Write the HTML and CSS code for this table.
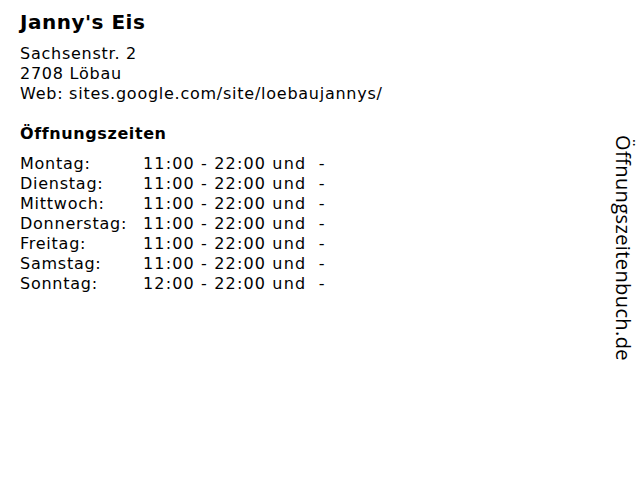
FILE: index.html
```html
<!DOCTYPE html>
<html lang="de">
<head>
<meta charset="utf-8">
<link rel="stylesheet" href="styles.css">
</head>
<body>
<div class="page">
  <main class="main">
    <h1 class="title">Janny's Eis</h1>
    <div class="address">
      <div>Sachsenstr. 2</div>
      <div>2708 Löbau</div>
      <div>Web: sites.google.com/site/loebaujannys/</div>
    </div>
    <h2 class="subtitle">Öffnungszeiten</h2>
    <div class="hours">
      <span class="day">Montag:</span><span class="time">11:00 - 22:00 und&nbsp; -</span>
      <span class="day">Dienstag:</span><span class="time">11:00 - 22:00 und&nbsp; -</span>
      <span class="day">Mittwoch:</span><span class="time">11:00 - 22:00 und&nbsp; -</span>
      <span class="day">Donnerstag:</span><span class="time">11:00 - 22:00 und&nbsp; -</span>
      <span class="day">Freitag:</span><span class="time">11:00 - 22:00 und&nbsp; -</span>
      <span class="day">Samstag:</span><span class="time">11:00 - 22:00 und&nbsp; -</span>
      <span class="day">Sonntag:</span><span class="time">12:00 - 22:00 und&nbsp; -</span>
    </div>
  </main>
  <aside class="side">Öffnungszeitenbuch.de</aside>
</div>
</body>
</html>
```
FILE: styles.css
```css
html, body {
  margin: 0;
  padding: 0;
  background: #fff;
}
body {
  font-family: "DejaVu Sans", Verdana, sans-serif;
  color: #000;
  font-size: 16px;
  line-height: 20px;
  letter-spacing: 0.75px;
}
.page {
  display: flex;
  width: 640px;
  height: 480px;
}
.main {
  flex: 1;
  padding: 10px 0 0 20px;
}
.title {
  margin: 0;
  font-size: 20px;
  line-height: 24px;
  font-weight: bold;
  letter-spacing: 0.5px;
}
.address {
  margin-top: 10px;
}
.subtitle {
  margin: 20px 0 0;
  font-size: 16px;
  line-height: 20px;
  font-weight: bold;
  letter-spacing: 0.6px;
}
.hours {
  margin-top: 10px;
  display: grid;
  grid-template-columns: 123px auto;
}
.time {
  letter-spacing: 1.15px;
}
.side {
  font-family: "Open Sans", sans-serif;
  font-size: 20px;
  line-height: 26px;
  letter-spacing: 0.4px;
  writing-mode: vertical-rl;
  margin-top: 135px;
  margin-right: 4px;
  align-self: flex-start;
}
```
